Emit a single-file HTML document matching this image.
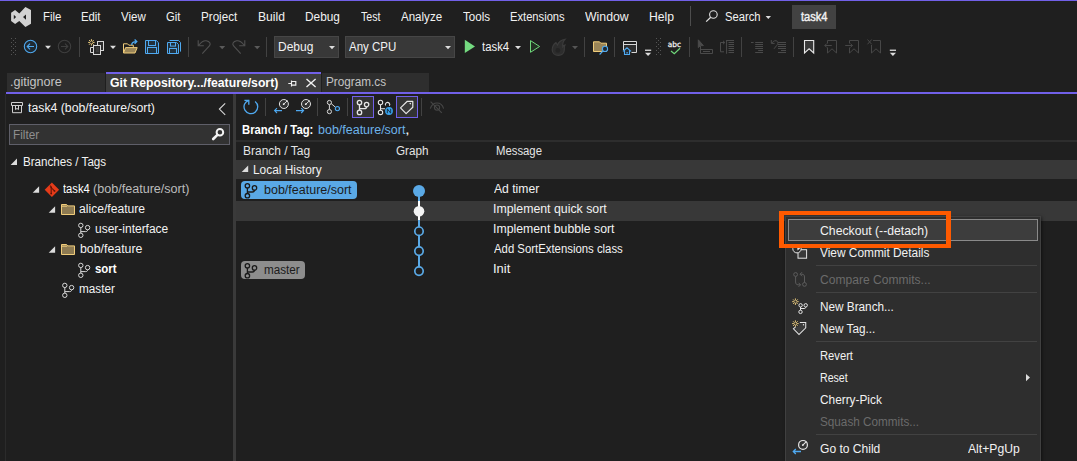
<!DOCTYPE html>
<html lang="en"><head><meta charset="utf-8"><title>Git Repository - task4</title>
<style>
html,body{margin:0;padding:0}
body{width:1077px;height:461px;overflow:hidden;background:#1f1f1f;position:relative;font-family:"Liberation Sans",sans-serif;font-size:12px}
.b{position:absolute;box-sizing:border-box}
svg{position:absolute;overflow:visible}
.t{position:absolute;white-space:nowrap;line-height:16px;font-size:12px;transform-origin:0 0;display:block}
.vs{position:absolute;width:1px;background:#424242}

</style></head>
<body>
<!-- window accent line -->
<div class="b" style="left:0;top:0;width:1077px;height:1px;background:#7160e8"></div>

<!-- VS logo -->
<svg style="left:0;top:0" width="40" height="32" viewBox="0 0 40 32"><path fill="#d2d2d2" fill-rule="evenodd" d="M11.1 12.7 L15.1 9.9 L19.3 13.4 L25.4 6.9 L31 10.1 L31 23.8 L25.4 27 L19.3 20.9 L15.1 24.1 L11.1 20.9 Z M13.8 14.7 L16.1 17 L13.8 19.2 Z M23 17 L26 14.4 L26 19.7 Z"/></svg>

<!-- menu separator + search icon + title box -->
<div class="vs" style="left:690px;top:6px;height:20px;background:#4d4d4d"></div>
<svg style="left:704px;top:8px" width="16" height="16" viewBox="0 0 16 16"><circle cx="9.4" cy="6.5" r="3.8" fill="none" stroke="#e0e0e0" stroke-width="1.1"/><path d="M6.7 9.3 L2.2 13.6" stroke="#e0e0e0" stroke-width="1.3" fill="none"/></svg>
<svg style="left:765px;top:15px" width="7" height="5" viewBox="0 0 7 5"><path d="M0.6 1 L6 1 L3.3 4 Z" fill="#dcdcdc"/></svg>
<div class="b" style="left:792px;top:5px;width:44px;height:24px;background:#424242"></div>

<!-- ============ TOOLBAR ============ -->
<svg style="left:0;top:32px" width="1077" height="32" viewBox="0 32 1077 32">
 <defs>
  <g id="grip" fill="#555"><rect x="0" y="38" width="1" height="1"/><rect x="4" y="38" width="1" height="1"/><rect x="2" y="40" width="1" height="1"/><rect x="0" y="42" width="1" height="1"/><rect x="4" y="42" width="1" height="1"/><rect x="2" y="44" width="1" height="1"/><rect x="0" y="46" width="1" height="1"/><rect x="4" y="46" width="1" height="1"/><rect x="2" y="48" width="1" height="1"/><rect x="0" y="50" width="1" height="1"/><rect x="4" y="50" width="1" height="1"/><rect x="2" y="52" width="1" height="1"/><rect x="0" y="54" width="1" height="1"/><rect x="4" y="54" width="1" height="1"/></g>
  <path id="dd" d="M0 0 L6 0 L3 3.2 Z"/>
 </defs>
 <use href="#grip" x="11" y="0"/>
 <use href="#grip" x="656" y="0"/>
 <!-- back -->
 <circle cx="30.5" cy="46.5" r="6.2" fill="#1f2a33" stroke="#4fa9f0" stroke-width="1.1"/>
 <path d="M34 46.5 H27.3 M30 43.6 L27.2 46.5 L30 49.4" fill="none" stroke="#4fa9f0" stroke-width="1.1"/>
 <use href="#dd" x="45" y="45.8" fill="#dcdcdc"/>
 <!-- forward (disabled) -->
 <circle cx="64.5" cy="46.5" r="6.2" fill="none" stroke="#3e3e3e" stroke-width="1.1"/>
 <path d="M61 46.5 H67.7 M65 43.6 L67.8 46.5 L65 49.4" fill="none" stroke="#3e3e3e" stroke-width="1.1"/>
 <rect x="79" y="37" width="1" height="20" fill="#424242"/>
 <!-- new item -->
 <g fill="#2b2b2b" stroke="#d6d6d6" stroke-width="1">
  <rect x="97.5" y="41.5" width="6" height="9"/>
  <path d="M93.5 47.5 H90.5 V52.5 H93.5" fill="none"/>
  <rect x="93.5" y="45.5" width="7" height="9"/>
 </g>
 <rect x="96" y="47" width="3" height="5" fill="#3a3a3a"/>
 <g stroke="#f0d080" stroke-width="1" fill="none"><path d="M91.4 39.2 V45.6 M88.2 42.4 H94.6 M89.1 40.1 L93.7 44.7 M93.7 40.1 L89.1 44.7"/></g>
 <circle cx="91.4" cy="42.4" r="1.2" fill="#1f1f1f"/>
 <use href="#dd" x="110" y="45.8" fill="#dcdcdc"/>
 <!-- open folder -->
 <path d="M123.5 53 V43.8 H127.5 L128.8 45.2 H133.3 V47.5" fill="none" stroke="#f0cc7a" stroke-width="1"/>
 <path d="M123.5 53 L125.6 47.6 H137.2 L135 53 Z" fill="#9a8558" stroke="#f0cc7a" stroke-width="1"/>
 <path d="M131.7 45 C131.7 42.6 133.6 41.6 136.3 41.6 M134.6 39.6 L136.8 41.6 L134.6 43.8" fill="none" stroke="#4fa9f0" stroke-width="1.3"/>
 <!-- save -->
 <g fill="#22303b" stroke="#4fa9f0" stroke-width="1">
  <path d="M145.5 40.5 H156.3 L158.5 42.7 V53.5 H145.5 Z"/>
  <rect x="148.5" y="40.5" width="7" height="5"/>
  <rect x="147.5" y="47.5" width="9" height="6"/>
 </g>
 <!-- save all -->
 <path d="M169.6 40.5 H178.6 L180.5 42.4 V51.6" fill="none" stroke="#4fa9f0" stroke-width="1"/>
 <g fill="#22303b" stroke="#4fa9f0" stroke-width="1">
  <path d="M167.5 42.5 H176.6 L178.5 44.4 V53.5 H167.5 Z"/>
  <rect x="170.5" y="42.5" width="5" height="3.6"/>
  <rect x="169.5" y="48.5" width="7" height="5"/>
 </g>
 <rect x="188" y="37" width="1" height="20" fill="#424242"/>
 <!-- undo / redo (disabled) -->
 <g fill="none" stroke="#505050" stroke-width="1.1">
  <path d="M198.2 40.2 V45.8 H203.8 M199 45 C201.5 41.8 204 40.4 206.3 40.8 C209.8 41.4 211 44 209.6 45.6 L202.3 53.6"/>
  <path d="M244.8 40.2 V45.8 H239.2 M244 45 C241.5 41.8 239 40.4 236.7 40.8 C233.2 41.4 232 44 233.4 45.6 L240.7 53.6"/>
 </g>
 <use href="#dd" x="219.2" y="46" fill="#5a5a5a"/>
 <use href="#dd" x="254.2" y="46" fill="#5a5a5a"/>
 <rect x="266" y="37" width="1" height="20" fill="#424242"/>
 <!-- combos -->
 <rect x="274.5" y="36.5" width="64" height="21" fill="#383838" stroke="#464646"/>
 <use href="#dd" x="329" y="46" fill="#dcdcdc"/>
 <rect x="345.5" y="36.5" width="109" height="21" fill="#383838" stroke="#464646"/>
 <use href="#dd" x="445" y="46" fill="#dcdcdc"/>
 <!-- start -->
 <path d="M464.8 39.8 L475 46.5 L464.8 53 Z" fill="#74da80"/>
 <use href="#dd" x="515" y="46" fill="#dcdcdc"/>
 <path d="M530.5 40.6 L539.6 46.5 L530.5 52.3 Z" fill="#233023" stroke="#6fd77a" stroke-width="1"/>
 <!-- hot reload (disabled) -->
 <path d="M565 39.3 C561.5 39.8 558.5 42.2 557.5 45 C556.8 44.2 556.3 43.4 556 42.6 C553.6 44.4 552.2 47 552.2 49.8 C552.2 53.2 554.9 55.4 558.4 55.4 C561.9 55.4 564.3 53 564.3 49.6 C564.3 48 564 46.6 564.9 45.2 C563.9 45.4 563.2 45.9 562.8 46.6 C562.4 44 562.9 41.4 565 39.3 Z" fill="#2d2d2d" stroke="#3b3b3b" stroke-width="1.2"/><circle cx="557.8" cy="50.4" r="2.4" fill="#242424"/>
 <use href="#dd" x="572" y="46" fill="#555"/>
 <rect x="584" y="37" width="1" height="20" fill="#424242"/>
 <!-- find in files -->
 <path d="M593.5 51.5 V41.8 H599.5 L600.8 43.2 H606.5 V51.5 Z" fill="#9a8558" stroke="#f0cc7a" stroke-width="1"/>
 <circle cx="605" cy="48.9" r="2.6" fill="#1f2a33" stroke="#4fa9f0" stroke-width="1.1"/>
 <path d="M603.1 50.8 L599.6 54.5" stroke="#4fa9f0" stroke-width="1.2"/>
 <rect x="614" y="37" width="1" height="20" fill="#424242"/>
 <!-- window home -->
 <path d="M623.5 50 V41.5 H636.5 V52.5 H631.5" fill="none" stroke="#d6d6d6" stroke-width="1"/>
 <rect x="624" y="45" width="12" height="7" fill="#2e2e2e"/>
 <path d="M623.5 44.5 H636.5" stroke="#d6d6d6" stroke-width="1"/>
 <path d="M623 51.3 L627 47.8 L631 51.3 M624.5 50.5 V54.5 H629.5 V50.5" fill="#1f2a33" stroke="#4fa9f0" stroke-width="1.1"/>
 <rect x="626.5" y="52" width="1.2" height="1.6" fill="#4fa9f0"/>
 <!-- overflow -->
 <rect x="645" y="49.6" width="6.2" height="1.3" fill="#dcdcdc"/><path d="M645 52.8 H651.2 L648.1 56 Z" fill="#dcdcdc"/>
 <!-- abc check -->
 <text x="667.8" y="47" font-family="'DejaVu Sans', sans-serif" font-size="7.6" textLength="13.2" lengthAdjust="spacingAndGlyphs" fill="#f4f4f4" stroke="#f4f4f4" stroke-width="0.25">abc</text>
 <path d="M671 51 L674.3 53.8 L680 48.3" fill="none" stroke="#6fd77a" stroke-width="1.2"/>
 <rect x="689" y="37" width="1" height="20" fill="#424242"/>
 <!-- disabled edit icons -->
 <g fill="none" stroke="#4a4a4a" stroke-width="1">
  <path d="M698.3 39.8 V47.6 L700.4 45.6 H703.4 Z" fill="#4a4a4a"/>
  <path d="M700.5 46 V53.5 H712.5 V49.5 H700.5 M703 51.5 H710"/>
  <path d="M724 51.8 H720.5 V42.5 H724.5 M723 40.8 L724.8 42.5 L723 44.2 M726.6 40 V53.8 M726.6 40.5 H734 M728.5 42.5 H734 M728.5 44.5 H734 M728.5 46.5 H734 M728.5 48.5 H734 M728.5 50.5 H734 M728.5 52.5 H734"/>
  <path d="M751 42.5 H753.6 M755.2 42.5 H763 M755.2 44.5 H763 M755.2 46.5 H763 M755.2 48.5 H763 M758.2 50.5 H763 M755.2 52.5 H763"/>
  <path d="M778 42.5 H786 M778 44.5 H786 M778 46.5 H786 M778 48.5 H786 M781 50.5 H786 M778 52.5 H786 M771.3 40 V43.4 H774.6 M771.8 43 C773.5 40.6 776 40 777.3 41.4 C778.4 42.8 777.6 44.4 776.6 45.6 L774 48.8"/>
 </g>
 <rect x="741" y="37" width="1" height="20" fill="#424242"/>
 <rect x="793" y="37" width="1" height="20" fill="#424242"/>
 <!-- bookmarks -->
 <path d="M804.5 40.5 H813.7 V53 L809.1 48.8 L804.5 53 Z" fill="#3a3a3a" stroke="#e8e8e8" stroke-width="1.1"/>
 <g fill="none" stroke="#474747" stroke-width="1">
  <path d="M827.5 43.5 V40.5 H836.5 V53 L832 48.8 L827.5 53 V47.5 M831.8 45.5 H824.8 M826.8 43.5 L824.8 45.5 L826.8 47.5"/>
  <path d="M849.5 43.5 V40.5 H858.5 V53 L854 48.8 L849.5 53 V47.5 M845.2 45.5 H852.4 M850.4 43.5 L852.4 45.5 L850.4 47.5"/>
  <path d="M873 40.5 H880.5 V53 L876 48.8 L871.5 53 V45 M867.5 39.5 L871.7 44.3 M871.7 39.5 L867.5 44.3"/>
 </g>
 <rect x="889.8" y="49.6" width="6.2" height="1.3" fill="#dcdcdc"/><path d="M889.8 52.8 H896 L892.9 56 Z" fill="#dcdcdc"/>
</svg>

<!-- ============ DOCUMENT TABS ============ -->
<div class="b" style="left:7px;top:73px;width:98px;height:19px;background:#2e2e2e"></div>
<div class="b" style="left:106px;top:72px;width:215px;height:20px;background:#3d3d3d;border-top:2px solid #7160e8"></div>
<div class="b" style="left:322px;top:73px;width:107px;height:19px;background:#2e2e2e"></div>
<div class="b" style="left:6px;top:92px;width:1071px;height:2px;background:#7160e8"></div>
<!-- pin + close -->
<svg style="left:286px;top:76px" width="34" height="14" viewBox="286 76 34 14">
 <path d="M288.3 83.5 H291.5 M291.5 80.6 V86.6 M291.5 81.5 H295.8 V85.2 H291.5 M291.5 85 H296" fill="none" stroke="#f0f0f0" stroke-width="1.15"/>
 <path d="M306.5 79 L315.6 87 M315.6 79 L306.5 87" fill="none" stroke="#f0f0f0" stroke-width="1.4"/>
</svg>

<!-- ============ LEFT PANE ============ -->
<div class="b" style="left:5px;top:94px;width:1px;height:367px;background:#2b2b2b"></div>
<div class="b" style="left:233px;top:94px;width:3px;height:367px;background:#3a3a3a"></div>
<div class="b" style="left:9px;top:124px;width:221px;height:21px;background:#323232;border:1px solid #5f5f69"></div>
<svg style="left:0;top:94px" width="233" height="220" viewBox="0 94 233 220">
 <defs>
  <g id="br" fill="none" stroke="#d8d8d8" stroke-width="1"><circle cx="2.8" cy="2.8" r="2.2"/><circle cx="2.8" cy="12.7" r="2.2"/><circle cx="9.6" cy="5" r="2.2"/><path d="M2.8 5 V10.5 M9.6 7.2 C9.6 8.6 8.8 9 7.6 9 H2.8"/></g>
  <path id="tri" d="M6 -0.5 V5.9 H-0.4 Z" fill="#dcdcdc"/>
  <g id="fold"><path d="M0.5 0.5 H5.6 L6.9 1.9 H13.5 V10.5 H0.5 Z" fill="#8d7a52" stroke="#f0cc7a" stroke-width="1"/><path d="M0.5 2.2 H6.2" stroke="#f0cc7a" stroke-width="1" fill="none"/></g>
 </defs>
 <!-- repo icon -->
 <path d="M11.5 102.5 H22.5 V105.5 H11.5 Z M12.5 105.5 V112.7 H21.5 V105.5 M15.5 105.5 V109.6 L17 108.4 L18.5 109.6 V105.5" fill="none" stroke="#d0d0d0" stroke-width="1"/>
 <!-- collapse chevron -->
 <path d="M225.2 103.4 L219.4 109.1 L225.2 114.8" fill="none" stroke="#d8d8d8" stroke-width="1.1"/>
 <!-- filter search icon -->
 <circle cx="219.9" cy="132.2" r="3.3" fill="none" stroke="#f4f4f4" stroke-width="2"/>
 <path d="M217.4 134.8 L213.2 139" stroke="#f4f4f4" stroke-width="2.6" stroke-linecap="round" fill="none"/>
 <!-- tree -->
 <use href="#tri" x="11" y="159"/>
 <use href="#tri" x="33.1" y="186.8"/>
 <path d="M51.9 182.6 L59.1 189.8 L51.9 197 L44.7 189.8 Z" fill="#e53b19"/>
 <path d="M50 185.6 L51.2 186.8 M51.2 187.6 V193.4 M52 188.4 L54.2 190.6" stroke="#6e1709" stroke-width="1.2" fill="none"/>
 <circle cx="51.2" cy="193.6" r="0.9" fill="#5a1408"/><circle cx="54.5" cy="190.9" r="0.9" fill="#5a1408"/><circle cx="51.2" cy="187.3" r="0.9" fill="#5a1408"/>
 <use href="#tri" x="49.1" y="206.8"/>
 <use href="#fold" x="61" y="204"/>
 <use href="#br" x="78" y="222.6"/>
 <use href="#tri" x="49.1" y="246.8"/>
 <use href="#fold" x="61" y="244"/>
 <use href="#br" x="78" y="262.6"/>
 <use href="#br" x="62" y="282.6"/>
</svg>

<!-- ============ MAIN PANE ============ -->
<div class="b" style="left:236px;top:140px;width:841px;height:2px;background:#2d2d2d"></div>
<div class="b" style="left:236px;top:160px;width:841px;height:19px;background:#383838"></div>
<div class="b" style="left:236px;top:201px;width:841px;height:20px;background:#383838"></div>
<!-- toggled buttons -->
<div class="b" style="left:352px;top:96px;width:22px;height:22px;background:#333;border:1px solid #7160e8"></div>
<div class="b" style="left:396px;top:96px;width:22px;height:22px;background:#333;border:1px solid #7160e8"></div>
<!-- badges -->
<div class="b" style="left:241px;top:181px;width:116px;height:18px;background:#5aa9e6;border-radius:4px"></div>
<div class="b" style="left:241px;top:261px;width:64px;height:18px;background:#8d8d8d;border-radius:4px"></div>
<svg style="left:236px;top:94px" width="300" height="200" viewBox="236 94 300 200">
 <defs>
  <g id="br2" fill="none" stroke-width="1.3"><circle cx="2.8" cy="2.8" r="2.2"/><circle cx="2.8" cy="12.7" r="2.2"/><circle cx="9.9" cy="4.9" r="2.2"/><path d="M2.8 5 V10.5 M9.9 7.1 C9.9 8.6 9 9 7.8 9 H2.8"/></g>
 </defs>
 <!-- refresh -->
 <path d="M248.7 100.3 A6.85 6.85 0 1 0 255.1 101.4" fill="none" stroke="#4fa9f0" stroke-width="1.3"/>
 <path d="M244.4 100.4 H248.8 V104.8" fill="none" stroke="#4fa9f0" stroke-width="1.3"/>
 <rect x="265" y="98" width="1" height="18" fill="#424242"/>
 <!-- go to child / parent -->
 <circle cx="283.9" cy="104" r="4.5" fill="#333" stroke="#e0e0e0" stroke-width="1"/>
 <path d="M283.7 104.2 L287.6 100.5" stroke="#e0e0e0" stroke-width="1"/><circle cx="283.7" cy="104.2" r="0.9" fill="#f0f0f0"/>
 <path d="M282 110.6 H274.6 M277 108.2 L274.6 110.6 L277 113" fill="none" stroke="#4fa9f0" stroke-width="1.1"/>
 <circle cx="306" cy="104" r="4.5" fill="#333" stroke="#e0e0e0" stroke-width="1"/>
 <path d="M305.8 104.2 L309.7 100.5" stroke="#e0e0e0" stroke-width="1"/><circle cx="305.8" cy="104.2" r="0.9" fill="#f0f0f0"/>
 <path d="M296 110.6 H303.6 M301.2 108.2 L303.6 110.6 L301.2 113" fill="none" stroke="#4fa9f0" stroke-width="1.1"/>
 <rect x="317" y="98" width="1" height="18" fill="#424242"/>
 <!-- graph icon -->
 <g fill="#2a2a2a" stroke="#d8d8d8" stroke-width="1"><path d="M329.4 104.6 V109.4 M331.2 103.6 L335.4 107.2" fill="none"/><circle cx="329.4" cy="102.5" r="2.1"/><circle cx="329.4" cy="111.6" r="2.1"/></g>
 <circle cx="337.4" cy="108.6" r="2.1" fill="#1f2a33" stroke="#4fa9f0" stroke-width="1.1"/>
 <rect x="347" y="98" width="1" height="18" fill="#424242"/>
 <!-- branch (toggled) -->
 <use href="#br2" x="356.7" y="99.7" stroke="#e6e6e6"/>
 <!-- remote branches -->
 <g fill="none" stroke="#e6e6e6" stroke-width="1.1"><circle cx="380.5" cy="102.5" r="2.2"/><circle cx="380.5" cy="112.4" r="2.2"/><path d="M380.5 104.7 V110.2 M380.5 108.7 H385"/><path d="M385.6 105.6 A2.2 2.2 0 1 1 389.4 105.8"/></g>
 <circle cx="389" cy="111" r="3.9" fill="#3aa4ee"/>
 <path d="M387.3 113.2 V108.8 L390.7 113.2 V108.8" fill="none" stroke="#143246" stroke-width="1"/>
 <!-- tag (toggled) -->
 <path d="M400.5 107.9 L407.3 101.3 H412.8 V107.2 L406.1 113.6 Z" fill="#3a3a3a" stroke="#e6e6e6" stroke-width="1.2" stroke-linejoin="round"/>
 <circle cx="410.3" cy="103.6" r="0.8" fill="#e6e6e6"/>
 <rect x="421" y="98" width="1" height="18" fill="#424242"/>
 <!-- hidden eye (disabled) -->
 <g fill="none" stroke="#464646" stroke-width="1.1"><path d="M430.3 108.6 C431.6 104.8 434 103 437 103 C440 103 442.5 104.8 443.6 108.6"/><circle cx="437" cy="107.6" r="2.6"/><path d="M430.6 101.6 L441.8 112.8"/></g>
 <!-- group expander -->
 <path d="M248.2 165.5 V172 H241.7 Z" fill="#dcdcdc"/>
 <!-- badge icons -->
 <use href="#br2" x="244.6" y="183" stroke="#1b1b1b"/>
 <use href="#br2" x="244.6" y="263" stroke="#1b1b1b"/>
 <!-- commit graph -->
 <rect x="418" y="191" width="2" height="10" fill="#5aa9e6"/>
 <rect x="418" y="201" width="2" height="20" fill="#ffffff"/>
 <rect x="418" y="220" width="2" height="51" fill="#5aa9e6"/>
 <circle cx="419" cy="191" r="6" fill="#5aa9e6"/>
 <circle cx="419" cy="211.2" r="5.3" fill="#f4f4f4"/>
 <circle cx="419" cy="231.2" r="4.2" fill="#1f1f1f" stroke="#5aa9e6" stroke-width="1.7"/>
 <circle cx="419" cy="251.1" r="4.2" fill="#1f1f1f" stroke="#5aa9e6" stroke-width="1.7"/>
 <circle cx="419" cy="271.1" r="4.2" fill="#1f1f1f" stroke="#5aa9e6" stroke-width="1.7"/>
</svg>

<!-- ============ CONTEXT MENU ============ -->
<div class="b" style="left:785px;top:216px;width:256px;height:250px;background:#2e2e2e;border:1px solid #404040;box-shadow:1px 1px 3px rgba(0,0,0,0.5)"></div>
<div class="b" style="left:788px;top:219px;width:250px;height:22px;background:#3d3d3d;border:1px solid #8a8a8a"></div>
<div class="b" style="left:816px;top:265px;width:221px;height:1px;background:#424242"></div>
<div class="b" style="left:816px;top:292px;width:221px;height:1px;background:#424242"></div>
<div class="b" style="left:816px;top:341px;width:221px;height:1px;background:#424242"></div>
<div class="b" style="left:816px;top:434px;width:221px;height:1px;background:#424242"></div>
<svg style="left:785px;top:216px" width="256" height="245" viewBox="785 216 256 245">
 <!-- view commit details -->
 <rect x="798" y="249.7" width="8.6" height="8.5" fill="#3a3a3a" stroke="#e6e6e6" stroke-width="1"/>
 <circle cx="797" cy="248.7" r="4.2" fill="#2e2e2e" stroke="#e6e6e6" stroke-width="1"/>
 <path d="M797 246 H800.5 V248 L797.6 250.6 Z" fill="#e6e6e6"/>
 <!-- compare commits (disabled) -->
 <g fill="none" stroke="#5c5c5c" stroke-width="1"><circle cx="795.6" cy="274.5" r="1.9"/><circle cx="804.5" cy="284.4" r="1.9"/><path d="M795.6 276.4 V282 C795.6 283.8 796.4 284.8 798.2 284.8 H800.4 M798.6 282.8 L800.6 284.8 L798.6 286.8 M804.5 282.5 V277 C804.5 275.2 803.7 274.2 801.9 274.2 H800.2 M802 272.2 L800 274.2 L802 276.2"/></g>
 <!-- new branch -->
 <g fill="none" stroke="#f0d080" stroke-width="0.9"><path d="M795.4 298.4 V305 M792.1 301.7 H798.7 M793.1 299.4 L797.7 304 M797.7 299.4 L793.1 304"/></g><circle cx="795.4" cy="301.7" r="1.1" fill="#2e2e2e"/>
 <g fill="none" stroke="#e6e6e6" stroke-width="1"><circle cx="800.6" cy="305.3" r="1.7"/><circle cx="800.5" cy="311.9" r="1.7"/><circle cx="805.7" cy="305.3" r="1.7"/><path d="M800.5 307 V310.2 M805.7 307 C805.7 308.2 805.2 308.5 804 308.5 H800.5"/></g>
 <!-- new tag -->
 <g fill="none" stroke="#f0d080" stroke-width="0.9"><path d="M795.4 320.3 V326.9 M792.1 323.6 H798.7 M793.1 321.3 L797.7 325.9 M797.7 321.3 L793.1 325.9"/></g><circle cx="795.4" cy="323.6" r="1.1" fill="#2e2e2e"/>
 <path d="M799.8 322.5 H805.7 V327.8 L799 334.5 L793.5 328.8 L795.6 326.9" fill="none" stroke="#e6e6e6" stroke-width="1.1"/>
 <path d="M799.4 323.2 H805.1 V327.6 L799 333.6 L794.4 328.8 L796.6 327 L798.8 326.2 Z" fill="#3c3c3c"/>
 <circle cx="803.5" cy="324.8" r="0.7" fill="#e6e6e6"/>
 <!-- submenu arrow -->
 <path d="M1026 374 L1030 377.6 L1026 381.2 Z" fill="#dcdcdc"/>
 <!-- go to child -->
 <circle cx="803" cy="444.9" r="4.4" fill="#333" stroke="#e6e6e6" stroke-width="1.2"/>
 <path d="M802.8 445.1 L806.3 441.6" stroke="#e6e6e6" stroke-width="1.1"/><circle cx="802.8" cy="445.1" r="0.9" fill="#f0f0f0"/>
 <path d="M801 451.5 H793.4 M795.8 449 L793.3 451.5 L795.8 454" fill="none" stroke="#4fa9f0" stroke-width="1.3"/>
</svg>
<!-- highlight annotation -->
<div class="b" style="left:779.3px;top:210.5px;width:171.6px;height:37px;border:solid #ff5a00;border-width:4.4px 5px"></div>

<div id="texts">
<span class="t" style="left:43.00px;top:9.00px;transform:scaleX(0.9515);color:#f2f2f2;">File</span>
<span class="t" style="left:81.00px;top:9.00px;transform:scaleX(0.9437);color:#f2f2f2;">Edit</span>
<span class="t" style="left:121.00px;top:9.00px;transform:scaleX(0.9621);color:#f2f2f2;">View</span>
<span class="t" style="left:166.00px;top:9.00px;transform:scaleX(0.9383);color:#f2f2f2;">Git</span>
<span class="t" style="left:201.00px;top:9.00px;transform:scaleX(0.9699);color:#f2f2f2;">Project</span>
<span class="t" style="left:258.00px;top:9.00px;transform:scaleX(1.0089);color:#f2f2f2;">Build</span>
<span class="t" style="left:305.00px;top:9.00px;transform:scaleX(0.9862);color:#f2f2f2;">Debug</span>
<span class="t" style="left:361.00px;top:9.00px;transform:scaleX(0.8871);color:#f2f2f2;">Test</span>
<span class="t" style="left:401.00px;top:9.00px;transform:scaleX(0.9621);color:#f2f2f2;">Analyze</span>
<span class="t" style="left:463.00px;top:9.00px;transform:scaleX(0.9644);color:#f2f2f2;">Tools</span>
<span class="t" style="left:510.00px;top:9.00px;transform:scaleX(0.9308);color:#f2f2f2;">Extensions</span>
<span class="t" style="left:585.00px;top:9.00px;transform:scaleX(1.0243);color:#f2f2f2;">Window</span>
<span class="t" style="left:649.00px;top:9.00px;transform:scaleX(1.0132);color:#f2f2f2;">Help</span>
<span class="t" style="left:725.00px;top:9.00px;transform:scaleX(0.9334);color:#f2f2f2;">Search</span>
<span class="t" style="left:801.00px;top:9.00px;transform:scaleX(0.9251);color:#f2f2f2;-webkit-text-stroke:0.4px #f2f2f2;">task4</span>
<span class="t" style="left:278.00px;top:39.00px;transform:scaleX(1.0010);color:#f2f2f2;">Debug</span>
<span class="t" style="left:349.00px;top:39.00px;transform:scaleX(0.9581);color:#f2f2f2;">Any CPU</span>
<span class="t" style="left:482.00px;top:39.00px;transform:scaleX(0.9474);color:#f2f2f2;">task4</span>
<span class="t" style="left:10.00px;top:74.00px;transform:scaleX(1.0483);color:#c4c4c4;">.gitignore</span>
<span class="t" style="left:110.00px;top:75.00px;transform:scaleX(1.0190);color:#ffffff;font-weight:700;">Git Repository.../feature/sort)</span>
<span class="t" style="left:326.00px;top:74.00px;transform:scaleX(0.9800);color:#c4c4c4;">Program.cs</span>
<span class="t" style="left:28.00px;top:100.00px;transform:scaleX(1.0234);color:#f2f2f2;">task4 (bob/feature/sort)</span>
<span class="t" style="left:13.00px;top:127.00px;transform:scaleX(0.9803);color:#8f8f8f;">Filter</span>
<span class="t" style="left:23.00px;top:154.00px;transform:scaleX(0.9687);color:#f2f2f2;">Branches / Tags</span>
<span class="t" style="left:63.00px;top:181.00px;transform:scaleX(0.9355);color:#ffffff;">task4</span>
<span class="t" style="left:93.00px;top:181.00px;transform:scaleX(1.0480);color:#bcbcbc;">(bob/feature/sort)</span>
<span class="t" style="left:79.00px;top:201.00px;transform:scaleX(1.0101);color:#f2f2f2;">alice/feature</span>
<span class="t" style="left:95.00px;top:221.00px;transform:scaleX(0.9987);color:#f2f2f2;">user-interface</span>
<span class="t" style="left:80.00px;top:241.00px;transform:scaleX(1.0279);color:#f2f2f2;">bob/feature</span>
<span class="t" style="left:95.00px;top:261.00px;transform:scaleX(0.9537);color:#ffffff;font-weight:700;">sort</span>
<span class="t" style="left:79.00px;top:281.00px;transform:scaleX(0.9796);color:#f2f2f2;">master</span>
<span class="t" style="left:242.00px;top:122.00px;transform:scaleX(0.9412);color:#ffffff;font-weight:700;">Branch / Tag:</span>
<span class="t" style="left:318.00px;top:122.00px;transform:scaleX(1.0399);color:#6db3ea;">bob/feature/sort</span>
<span class="t" style="left:405.00px;top:122.00px;transform:scaleX(1.4233);color:#f2f2f2;">,</span>
<span class="t" style="left:243.00px;top:143.00px;transform:scaleX(1.0002);color:#e4e4e4;">Branch / Tag</span>
<span class="t" style="left:396.00px;top:143.00px;transform:scaleX(0.9757);color:#e4e4e4;">Graph</span>
<span class="t" style="left:496.00px;top:143.00px;transform:scaleX(0.9435);color:#e4e4e4;">Message</span>
<span class="t" style="left:253.00px;top:162.00px;transform:scaleX(0.9898);color:#f2f2f2;">Local History</span>
<span class="t" style="left:264.00px;top:182.00px;transform:scaleX(1.0417);color:#1b1b1b;">bob/feature/sort</span>
<span class="t" style="left:264.00px;top:262.00px;transform:scaleX(0.9712);color:#1b1b1b;">master</span>
<span class="t" style="left:494.00px;top:181.00px;transform:scaleX(1.0130);color:#f2f2f2;">Ad timer</span>
<span class="t" style="left:493.00px;top:201.00px;transform:scaleX(1.0272);color:#f2f2f2;">Implement quick sort</span>
<span class="t" style="left:493.00px;top:221.00px;transform:scaleX(1.0234);color:#f2f2f2;">Implement bubble sort</span>
<span class="t" style="left:494.00px;top:241.00px;transform:scaleX(0.9463);color:#f2f2f2;">Add SortExtensions class</span>
<span class="t" style="left:493.00px;top:261.00px;transform:scaleX(1.0793);color:#f2f2f2;">Init</span>
<span class="t" style="left:820.00px;top:223.00px;transform:scaleX(1.0186);color:#f2f2f2;">Checkout (--detach)</span>
<span class="t" style="left:820.00px;top:245.00px;transform:scaleX(0.9898);color:#f2f2f2;">View Commit Details</span>
<span class="t" style="left:820.00px;top:272.00px;transform:scaleX(1.0052);color:#6b6b6b;">Compare Commits...</span>
<span class="t" style="left:820.00px;top:299.00px;transform:scaleX(0.9805);color:#f2f2f2;">New Branch...</span>
<span class="t" style="left:820.00px;top:321.00px;transform:scaleX(0.9797);color:#f2f2f2;">New Tag...</span>
<span class="t" style="left:820.00px;top:348.00px;transform:scaleX(0.9327);color:#f2f2f2;">Revert</span>
<span class="t" style="left:820.00px;top:370.00px;transform:scaleX(0.8841);color:#f2f2f2;">Reset</span>
<span class="t" style="left:820.00px;top:392.00px;transform:scaleX(0.9868);color:#f2f2f2;">Cherry-Pick</span>
<span class="t" style="left:820.00px;top:414.00px;transform:scaleX(0.9771);color:#6b6b6b;">Squash Commits...</span>
<span class="t" style="left:820.00px;top:441.00px;transform:scaleX(1.0050);color:#f2f2f2;">Go to Child</span>
<span class="t" style="left:968.00px;top:441.00px;transform:scaleX(1.0133);color:#f2f2f2;">Alt+PgUp</span>
</div>
</body></html>
